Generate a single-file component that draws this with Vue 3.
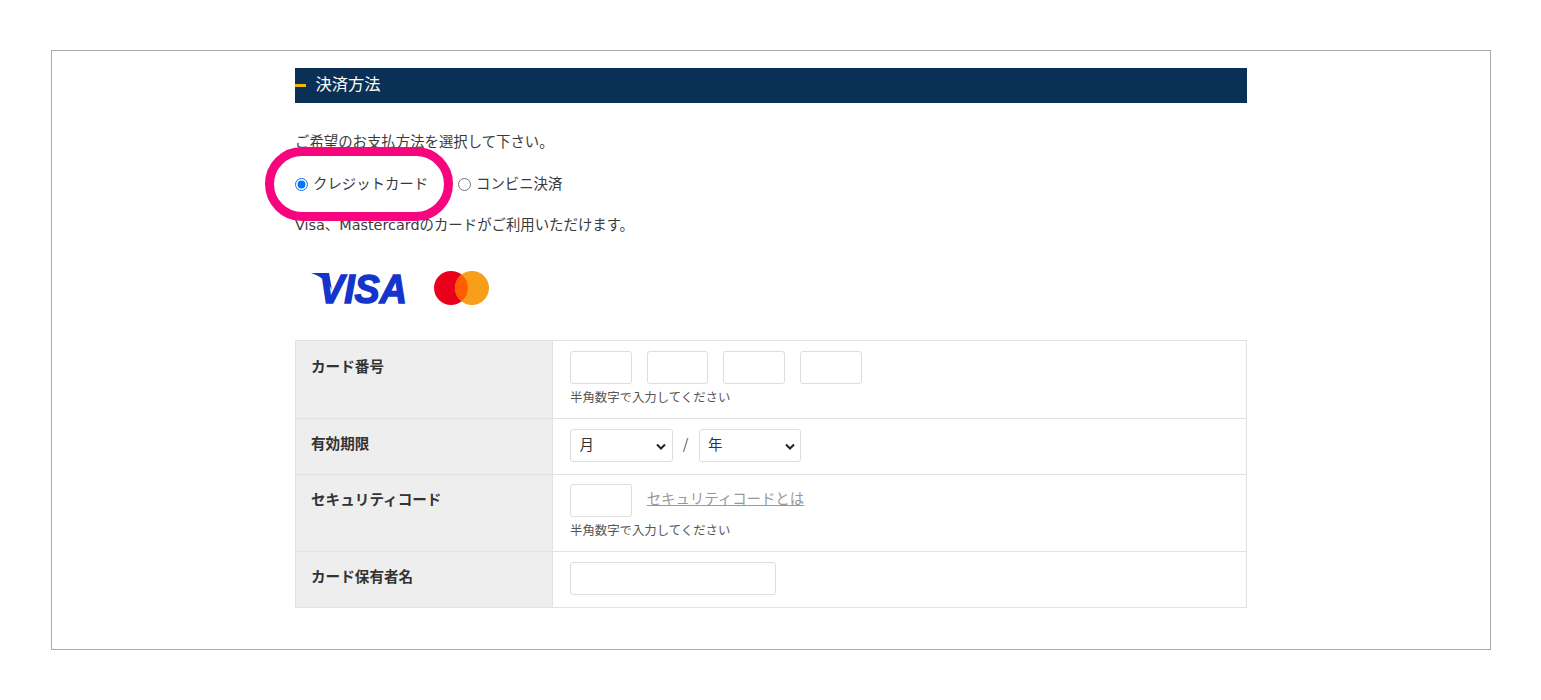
<script setup>
const numberInputs = [1, 2, 3, 4]
</script>

<template>
  <div class="frame">
    <section class="content">
      <h2 class="heading"><span>決済方法</span></h2>
      <p class="lead">ご希望のお支払方法を選択して下さい。</p>
      <div class="methods">
        <label class="method first"><input type="radio" name="pay" checked /><span>クレジットカード</span></label>
        <label class="method"><input type="radio" name="pay" /><span>コンビニ決済</span></label>
        <div class="marker"></div>
      </div>
      <p class="note">Visa、Mastercardのカードがご利用いただけます。</p>
      <div class="logos">
        <svg class="visa" width="112" height="44" viewBox="0 0 112 44">
          <path d="M1 7H19L22 24C19 17 12 11 1 7Z" fill="#1434cb" />
          <text x="9" y="36.5" textLength="88" lengthAdjust="spacingAndGlyphs" class="visa-text">VISA</text>
        </svg>
        <svg class="mc" width="55" height="34" viewBox="0 0 55 34">
          <circle cx="17" cy="17" r="17" fill="#eb001b" />
          <circle cx="38" cy="17" r="17" fill="#f79e1b" />
          <path d="M27.5 3.6a17 17 0 0 1 0 26.8a17 17 0 0 1 0-26.8z" fill="#ff5f00" />
        </svg>
      </div>
      <table class="form">
        <tbody>
          <tr class="r1">
            <th>カード番号</th>
            <td>
              <div class="inputs">
                <input v-for="n in numberInputs" :key="n" class="field short" type="text" />
              </div>
              <p class="hint">半角数字で入力してください</p>
            </td>
          </tr>
          <tr class="r2">
            <th>有効期限</th>
            <td>
              <div class="dates">
                <select class="sel"><option>月</option></select>
                <span class="slash">/</span>
                <select class="sel"><option>年</option></select>
              </div>
            </td>
          </tr>
          <tr class="r3">
            <th>セキュリティコード</th>
            <td>
              <div class="inputs">
                <input class="field short" type="text" />
                <a class="link" href="#">セキュリティコードとは</a>
              </div>
              <p class="hint">半角数字で入力してください</p>
            </td>
          </tr>
          <tr class="r2">
            <th>カード保有者名</th>
            <td><input class="field long" type="text" /></td>
          </tr>
        </tbody>
      </table>
    </section>
  </div>
</template>

<style>
html, body { margin: 0; background: #fff; }
</style>

<style scoped>
.frame {
  box-sizing: border-box;
  width: 1440px;
  height: 600px;
  margin: 50px 0 0 51px;
  padding: 17px 0 0 243px;
  border: 1px solid #aaa;
  font-family: "Noto Sans CJK JP", "Liberation Sans", sans-serif;
  font-size: 14.4px;
  color: #3a3a3a;
}
.content { width: 952px; }
.heading {
  position: relative;
  box-sizing: border-box;
  height: 35px;
  margin: 0;
  padding-left: 20.5px;
  background: #0b3055;
  color: #fff;
  font-size: 16.3px;
  font-weight: 400;
  line-height: 31px;
}
.heading::before {
  content: "";
  position: absolute;
  left: 0;
  top: 16px;
  width: 11px;
  height: 3px;
  background: #f5b50a;
}
.lead { margin: 27px 0 0; line-height: 22px; }
.methods {
  position: relative;
  display: flex;
  align-items: center;
  height: 22px;
  margin-top: 20px;
}
.method { display: flex; align-items: center; line-height: 22px; }
.method input { width: 13px; height: 13px; margin: 3px 5px 0 0; }
.method.first { width: 163px; }
.marker {
  position: absolute;
  left: -30px;
  top: -25px;
  box-sizing: border-box;
  width: 188px;
  height: 74px;
  border: 9px solid #f7047f;
  border-radius: 37px;
  pointer-events: none;
}
.note {
  margin: 20px 0 0;
  font-family: "DejaVu Sans", "Noto Sans CJK JP", sans-serif;
  line-height: 22px;
}
.logos {
  display: flex;
  align-items: center;
  gap: 26px;
  height: 34px;
  margin: 35px 0 0 15px;
}
.visa { flex: none; margin: -5px -14px -5px 0; }
.visa-text {
  font-family: "Liberation Sans", sans-serif;
  font-weight: 700;
  font-style: italic;
  font-size: 41px;
  fill: #1434cb;
  stroke: #1434cb;
  stroke-width: 1.5;
}
.form {
  width: 952px;
  margin-top: 35px;
  border-collapse: collapse;
  table-layout: fixed;
}
.form th, .form td {
  border: 1px solid #e2e2e2;
  padding: 0;
  vertical-align: top;
}
.form th {
  box-sizing: border-box;
  width: 257px;
  padding: 13px 0 0 15px;
  background: #eee;
  font-size: 14.6px;
  font-weight: 700;
  text-align: left;
  line-height: 22px;
  color: #333;
}
.r1 th { padding-top: 14px; }
.form td { padding: 10px 0 0 17px; }
.r1 { height: 77.5px; }
.r2 { height: 56px; }
.r3 { height: 77px; }
.r3 td { padding-top: 9.5px; }
.r3 .hint { margin-top: 2.5px; }
.inputs { display: flex; align-items: flex-start; gap: 15px; height: 33px; }
.field {
  box-sizing: border-box;
  display: block;
  height: 33px;
  padding: 0;
  background: #fff;
  border: 1px solid #ddd;
  border-radius: 3px;
}
.short { width: 61.7px; }
.long { width: 206px; }
.hint {
  margin: 3px 0 0;
  font-size: 12.4px;
  line-height: 20px;
  color: #555;
}
.dates { display: flex; align-items: center; height: 33px; }
.sel {
  box-sizing: border-box;
  width: 102.5px;
  height: 33px;
  padding: 0 0 4px 8.5px;
  appearance: none;
  background: #fff url("data:image/svg+xml,%3Csvg xmlns='http://www.w3.org/2000/svg' width='10' height='7'%3E%3Cpath d='M1 1.5l4 4 4-4' fill='none' stroke='%23222' stroke-width='2'/%3E%3C/svg%3E") no-repeat 85px 13px;
  border: 1px solid #ddd;
  border-radius: 3px;
  font-family: inherit;
  font-size: 14.4px;
  color: #333;
}
.slash { width: 26px; padding-bottom: 6px; text-align: center; color: #555; }
.link {
  color: #999;
  line-height: 28px;
  text-decoration: underline;
}
</style>
